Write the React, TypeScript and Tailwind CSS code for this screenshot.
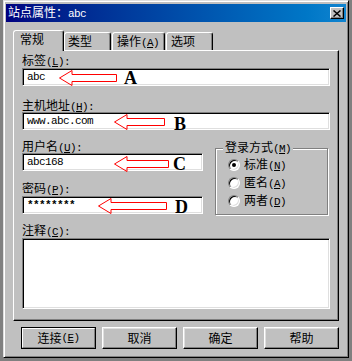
import React from "react";

function Acc({ k, colon = false }: { k: string; colon?: boolean }) {
  return (
    <span className="font-['Liberation_Mono',monospace] text-[11px] tracking-[-0.6px]">
      (<span className="underline underline-offset-[1px]">{k}</span>){colon ? ":" : ""}
    </span>
  );
}

function Label({ text, k, className = "" }: { text: string; k: string; className?: string }) {
  return (
    <div className={`h-[14px] leading-[14px] whitespace-nowrap ${className}`}>
      {text}
      <Acc k={k} colon />
    </div>
  );
}

function Field({
  className = "",
  children,
}: {
  className?: string;
  children?: React.ReactNode;
}) {
  return (
    <div
      className={`relative bg-white border border-t-[#808080] border-l-[#808080] border-r-white border-b-white shadow-[inset_1px_1px_0_#000,inset_-1px_-1px_0_#dfdfdf] ${className}`}
    >
      {children}
    </div>
  );
}

function FieldText({ text, bold = false }: { text: string; bold?: boolean }) {
  return (
    <div
      className={`h-full flex items-center pl-[4px] font-['Liberation_Mono',monospace] text-[11px] tracking-[-0.6px] ${bold ? "font-bold" : ""}`}
    >
      {text}
    </div>
  );
}

function Arrow({ w, className }: { w: number; className: string }) {
  const pts = `0.5,8 13,0.5 13,4.5 ${w - 0.5},4.5 ${w - 0.5},11.5 13,11.5 13,15.5`;
  return (
    <svg className={`absolute ${className}`} width={w} height={16} viewBox={`0 0 ${w} 16`}>
      <polygon points={pts} fill="none" stroke="#ff0000" strokeWidth="1" />
    </svg>
  );
}

function Letter({ ch, className }: { ch: string; className: string }) {
  return (
    <span
      className={`absolute font-['Liberation_Serif',serif] text-[18px] leading-[18px] font-bold text-black ${className}`}
    >
      {ch}
    </span>
  );
}

function Radio({ checked, label, k }: { checked?: boolean; label: string; k: string }) {
  return (
    <div className="flex items-center h-[18px]">
      <span className="w-[12px] h-[12px] rounded-full bg-white border border-t-[#808080] border-l-[#808080] border-r-white border-b-white shadow-[inset_1px_1px_0_#000,inset_-1px_-1px_0_#dfdfdf] flex items-center justify-center">
        {checked && <span className="w-[4px] h-[4px] rounded-full bg-black" />}
      </span>
      <span className="ml-[4px] leading-[14px] whitespace-nowrap">
        {label}
        <Acc k={k} />
      </span>
    </div>
  );
}

function Btn({ children, def = false }: { children: React.ReactNode; def?: boolean }) {
  if (def) {
    return (
      <div className="w-[75px] h-[22px] border border-black bg-[#c0c0c0]">
        <div className="w-full h-full border border-t-white border-l-white border-r-[#808080] border-b-[#808080] flex items-center justify-center leading-[14px]">
          {children}
        </div>
      </div>
    );
  }
  return (
    <div className="w-[75px] h-[22px] bg-[#c0c0c0] border border-t-white border-l-white border-r-black border-b-black shadow-[inset_-1px_-1px_0_#808080,inset_1px_1px_0_#dfdfdf] flex items-center justify-center leading-[14px]">
      {children}
    </div>
  );
}

export default function App() {
  return (
    <div className="w-[352px] h-[361px] bg-[#808080] overflow-hidden font-['Noto_Sans_CJK_SC',sans-serif] text-[12px] text-black">
      <div className="ml-[3px] w-[346px] h-[358px] bg-[#c0c0c0] border border-t-[#dfdfdf] border-l-[#dfdfdf] border-r-black border-b-black shadow-[inset_1px_1px_0_#fff,inset_-1px_-1px_0_#808080] px-[2px] pt-[3px] flex flex-col">
        {/* Title bar */}
        <div className="h-[18px] flex items-center justify-between bg-linear-to-r from-[#000080] to-[#1084d0] pl-[2px] pr-[2px]">
          <span className="text-white leading-[14px] whitespace-nowrap">
            站点属性：
            <span className="font-['Liberation_Mono',monospace] text-[11px] tracking-[-0.6px]">abc</span>
          </span>
          <div className="w-[14px] h-[12px] bg-[#c0c0c0] border border-t-white border-l-white border-r-black border-b-black shadow-[inset_-1px_-1px_0_#808080] flex items-center justify-center">
            <svg width="8" height="7" viewBox="0 0 8 7">
              <path d="M0.5 0.5 L7.5 6.5 M7.5 0.5 L0.5 6.5" stroke="black" strokeWidth="1.5" />
            </svg>
          </div>
        </div>

        {/* Tabs */}
        <div className="mt-[8px] ml-[7px] h-[20px] flex items-end">
          <div className="relative z-10 -mb-px h-[21px] w-[51px] bg-[#c0c0c0] border-t border-l border-r border-t-white border-l-white border-r-black rounded-t-[3px] shadow-[inset_-1px_0_0_#808080] pl-[6px] pt-[1px] leading-[14px]">
            常规
          </div>
          <div className="h-[18px] w-[47px] bg-[#c0c0c0] border-t border-l border-r border-t-white border-l-white border-r-black rounded-t-[3px] shadow-[inset_-1px_0_0_#808080] pl-[3px] pt-[1px] leading-[14px]">
            类型
          </div>
          <div className="ml-[1px] h-[18px] w-[53px] bg-[#c0c0c0] border-t border-l border-r border-t-white border-l-white border-r-black rounded-t-[3px] shadow-[inset_-1px_0_0_#808080] pl-[4px] pt-[1px] leading-[14px] whitespace-nowrap">
            操作<Acc k="A" />
          </div>
          <div className="ml-[1px] h-[18px] w-[47px] bg-[#c0c0c0] border-t border-l border-r border-t-white border-l-white border-r-black rounded-t-[3px] shadow-[inset_-1px_0_0_#808080] pl-[4px] pt-[1px] leading-[14px]">
            选项
          </div>
        </div>

        {/* Panel */}
        <div className="ml-[7px] w-[326px] h-[271px] border border-t-white border-l-white border-r-black border-b-black shadow-[inset_-1px_-1px_0_#808080] pt-[2px] pl-[8px] flex flex-col">
          <Label text="标签" k="L" />
          <Field className="mt-[1px] w-[308px] h-[18px]">
            <FieldText text="abc" />
            <Arrow w={58} className="left-[36px] top-[1px]" />
            <Letter ch="A" className="left-[101px] top-[0px]" />
          </Field>

          <Label text="主机地址" k="H" className="mt-[12px]" />
          <Field className="w-[308px] h-[18px]">
            <FieldText text="www.abc.com" />
            <Arrow w={51} className="left-[91px] top-[1px]" />
            <Letter ch="B" className="left-[151px] top-[2px]" />
          </Field>

          <div className="mt-[9px] flex">
            <div className="w-[181px] flex flex-col">
              <Label text="用户名" k="U" />
              <Field className="w-[181px] h-[18px]">
                <FieldText text="abc168" />
                <Arrow w={55} className="left-[91px] top-[2px]" />
                <Letter ch="C" className="left-[150px] top-[1px]" />
              </Field>
              <Label text="密码" k="P" className="mt-[10px]" />
              <Field className="mt-[1px] w-[181px] h-[18px]">
                <FieldText text="********" bold />
                <Arrow w={69} className="left-[75px] top-[1px]" />
                <Letter ch="D" className="left-[152px] top-[1px]" />
              </Field>
            </div>
            <div className="relative ml-[12px] mt-[9px] w-[113px] h-[67px] border border-[#808080] shadow-[inset_1px_1px_0_#fff,1px_1px_0_#fff] pt-[7px] pl-[12px]">
              <span className="absolute left-[7px] -top-[9px] px-[2px] bg-[#c0c0c0] leading-[14px] whitespace-nowrap">
                登录方式<Acc k="M" />
              </span>
              <Radio checked label="标准" k="N" />
              <Radio label="匿名" k="A" />
              <Radio label="两者" k="D" />
            </div>
          </div>

          <Label text="注释" k="C" className="mt-[8px]" />
          <Field className="mt-[1px] w-[308px] h-[71px]" />
        </div>

        {/* Buttons */}
        <div className="mt-[6px] ml-[15px] flex gap-[6px]">
          <Btn def>
            连接<Acc k="E" />
          </Btn>
          <Btn>取消</Btn>
          <Btn>确定</Btn>
          <Btn>帮助</Btn>
        </div>
      </div>
    </div>
  );
}
